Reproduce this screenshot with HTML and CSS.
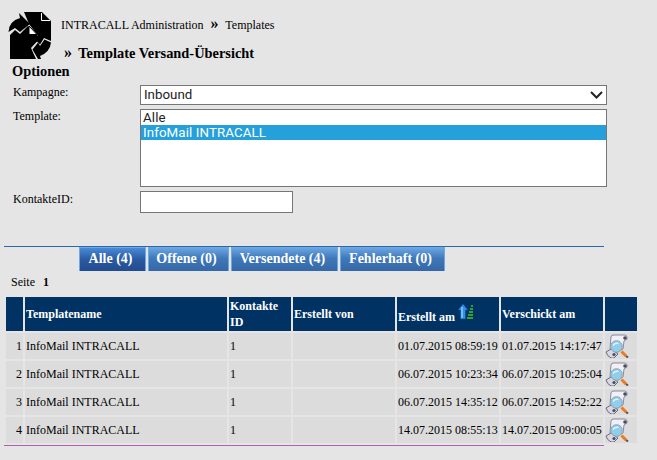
FILE: index.html
```html
<!DOCTYPE html>
<html lang="de">
<head>
  <meta charset="UTF-8">
  <title>INTRACALL Administration - Templates</title>
  <link rel="stylesheet" href="styles.css">
</head>
<body>
  <svg class="sprites" width="0" height="0">
    <symbol id="scroll" viewBox="0 0 24 24">
      <path d="M6 3 Q6 1 9 1 H20 Q23 2 22 5 L19 7 L18 15 L10 19 L5 15 Z" fill="#f0f0f6" stroke="#8a8a9c" stroke-width="1"/>
      <path d="M1 18 L6 15 L13 20 L9 24 H6 Q2 22 1 18 Z" fill="#d8d8e2" stroke="#6a6a7c" stroke-width="1"/>
      <circle cx="20" cy="4" r="1.8" fill="#4a4a60"/>
      <circle cx="9" cy="20.5" r="1.6" fill="#4a4a60"/>
      <circle cx="11.5" cy="12.5" r="5.8" fill="#92cdea" stroke="#8aa2b4" stroke-width="1"/>
      <path d="M8 11.5 Q10 8.5 13.5 9.5" fill="none" stroke="#dff3fc" stroke-width="1.5"/>
      <path d="M16.5 17.5 L21 22" stroke="#f07a1c" stroke-width="3"/>
      <path d="M21 22 L23 23.5" stroke="#555" stroke-width="2"/>
    </symbol>
  </svg>

  <header class="page-head">
    <svg class="logo" width="46" height="48" viewBox="8 12 46 48">
      <path d="M8.5 32 Q9 21 20 18 L19 13 L30 24 L20 32 L15 28 Z" fill="#000"/>
      <path d="M24 12 H42 L51 21 V41 L44 38 L40 44.5 L37 41.5 L31 47 V36 H38 L29 24 Z" fill="#000"/>
      <path d="M10 35 L15 30 L20 34 L28 26 L38 36 V40 L31 48 L36 59 H10 Z" fill="#000"/>
      <path d="M40 46 L44.5 39.5 L51 42.5 Q50 52 40 56 L41 59 H38 L32.5 49.5 L38 42.5 Z" fill="#000"/>
      <path d="M41.5 13 V20.5 H50" fill="none" stroke="#fff" stroke-width="1"/>
      <path d="M29 26 L37 34.5 H29 Z" fill="#fff" stroke="#000" stroke-width="1"/>
    </svg>
    <div class="head-text">
      <div class="crumbs">INTRACALL Administration <span class="sep">»</span> Templates</div>
      <h1 class="title"><span class="sep">»</span> Template Versand-Übersicht</h1>
    </div>
  </header>

  <section class="options">
    <h2 class="options-title">Optionen</h2>
    <div class="form-grid">
      <label class="form-label" for="kampagne">Kampagne:</label>
      <select id="kampagne" class="field field-select">
        <option>Inbound</option>
      </select>
      <label class="form-label" for="template">Template:</label>
      <select id="template" class="field field-list" size="4">
        <option>Alle</option>
        <option selected>InfoMail INTRACALL</option>
      </select>
      <label class="form-label form-label-low" for="kontakt">KontakteID:</label>
      <input id="kontakt" class="field field-input" type="text">
    </div>
  </section>

  <nav class="tabs">
    <a class="tab tab-active" href="#">Alle (4)</a>
    <a class="tab" href="#">Offene (0)</a>
    <a class="tab" href="#">Versendete (4)</a>
    <a class="tab" href="#">Fehlerhaft (0)</a>
  </nav>

  <div class="pager">Seite <b>1</b></div>

  <table class="grid">
    <thead>
      <tr>
        <th class="col-nr"></th>
        <th class="col-name">Templatename</th>
        <th class="col-id">Kontakte ID</th>
        <th class="col-by">Erstellt von</th>
        <th class="col-date">Erstellt am
          <svg class="sort-icon" width="16" height="18" viewBox="0 0 16 18">
            <path d="M5 1 L10 7 H7.5 V16 H2.5 V7 H0 Z" fill="#2f8fe6" stroke="#0d4f96" stroke-width="0.6"/>
            <path d="M4 4 V15" stroke="#bfe3ff" stroke-width="1"/>
            <path d="M13 2 h2 v2 h-2z M12 5 h3 v2 h-3z M11 8 h4 v2 h-4z M10 11 h5 v2 h-5z M9 14 h6 v2 h-6z" fill="#2ea52e"/>
          </svg>
        </th>
        <th class="col-date">Verschickt am</th>
        <th class="col-act"></th>
      </tr>
    </thead>
    <tbody>
      <tr>
        <td class="nr">1</td><td>InfoMail INTRACALL</td><td>1</td><td></td>
        <td>01.07.2015 08:59:19</td><td>01.07.2015 14:17:47</td>
        <td class="act"><svg class="view-icon" width="24" height="24"><use href="#scroll"/></svg></td>
      </tr>
      <tr>
        <td class="nr">2</td><td>InfoMail INTRACALL</td><td>1</td><td></td>
        <td>06.07.2015 10:23:34</td><td>06.07.2015 10:25:04</td>
        <td class="act"><svg class="view-icon" width="24" height="24"><use href="#scroll"/></svg></td>
      </tr>
      <tr>
        <td class="nr">3</td><td>InfoMail INTRACALL</td><td>1</td><td></td>
        <td>06.07.2015 14:35:12</td><td>06.07.2015 14:52:22</td>
        <td class="act"><svg class="view-icon" width="24" height="24"><use href="#scroll"/></svg></td>
      </tr>
      <tr>
        <td class="nr">4</td><td>InfoMail INTRACALL</td><td>1</td><td></td>
        <td>14.07.2015 08:55:13</td><td>14.07.2015 09:00:05</td>
        <td class="act"><svg class="view-icon" width="24" height="24"><use href="#scroll"/></svg></td>
      </tr>
    </tbody>
  </table>
  <div class="grid-end"></div>
</body>
</html>
```

FILE: styles.css
```css
html, body {
  margin: 0;
  padding: 0;
}

body {
  width: 657px;
  height: 460px;
  overflow: hidden;
  background-color: #e5e5e5;
  color: #000;
  font-family: "Liberation Serif", "Times New Roman", serif;
  font-size: 12px;
}

.sprites {
  display: block;
  height: 0;
}

.page-head {
  display: flex;
  height: 63px;
  padding: 12px 0 0 8px;
  box-sizing: border-box;
}

.head-text {
  margin-left: 7px;
}

.crumbs {
  margin-top: 6px;
  line-height: 14px;
}

.crumbs .sep {
  margin: 0 4px 0 4px;
  font-size: 16px;
  font-weight: bold;
  line-height: 12px;
}

.title {
  margin: 13px 0 0 3px;
  font-size: 14.4px;
  line-height: 16px;
}

.title .sep {
  margin-right: 3px;
  font-size: 16px;
  line-height: 12px;
}

.options {
  height: 183px;
  width: 592px;
  margin-left: 4px;
  padding-left: 8px;
  border-bottom: 1px solid #2a6aa8;
}

.options-title {
  margin: 0;
  font-size: 14.4px;
  line-height: 16px;
}

.form-grid {
  display: grid;
  grid-template-columns: 127px 467px;
  grid-template-rows: 24px 82px 22px;
  margin-top: 6px;
  margin-left: 1px;
}

.form-label {
  line-height: 14px;
}

.form-label-low {
  padding-top: 1px;
}

.field {
  box-sizing: border-box;
  margin: 0;
  padding: 0;
  border: 1px solid #767676;
  border-radius: 0;
  background-color: #fff;
  font-family: Roboto, Arial, sans-serif;
  font-size: 13.33px;
  color: #222;
}

.field-select {
  appearance: none;
  width: 467px;
  height: 20px;
  padding: 0 0 2px 3px;
  outline: none;
  background-image: url("data:image/svg+xml,%3Csvg xmlns='http://www.w3.org/2000/svg' width='13' height='8'%3E%3Cpath d='M1 1 L6.5 6.5 L12 1' fill='none' stroke='%23222' stroke-width='2'/%3E%3C/svg%3E");
  background-repeat: no-repeat;
  background-position: right 3px top 5px;
}

.field-list {
  width: 467px;
  height: 78px;
  overflow: hidden;
  outline: none;
  letter-spacing: 0.1px;
}

.field-list option {
  padding: 0 2px;
  line-height: 15px;
  min-height: 15px;
}

.field-list option:checked {
  background: linear-gradient(#26a0da, #26a0da);
  color: #fff;
  -webkit-text-fill-color: #fff;
}

.field-input {
  width: 153px;
  height: 22px;
}

.tabs {
  display: grid;
  grid-template-columns: 67px 81px 107px 105px;
  gap: 2px;
  height: 24px;
  margin-left: 79px;
}

.tab {
  display: block;
  box-sizing: border-box;
  padding-right: 4px;
  border: 1px solid #6fa8e0;
  border-bottom: 0;
  background: linear-gradient(#6aa5e2, #3f78b8 45%, #3568a8);
  color: #fff;
  font-size: 14px;
  font-weight: bold;
  line-height: 22px;
  text-align: center;
  text-decoration: none;
  white-space: nowrap;
}

.tab-active {
  background: linear-gradient(#4a8ad6, #2a5aa0 50%, #234c90);
}

.pager {
  height: 20px;
  margin: 4px 0 0 11px;
  line-height: 14px;
}

.pager b {
  margin-left: 5px;
}

.grid {
  table-layout: fixed;
  width: 635px;
  margin-left: 4px;
  border-collapse: separate;
  border-spacing: 2px;
}

.grid th {
  height: 34px;
  padding: 0 1px;
  background-color: #003264;
  color: #fff;
  font-size: 12px;
  line-height: 16px;
  text-align: left;
}

.grid td {
  height: 26px;
  padding: 1px 1px 0;
  box-sizing: border-box;
  background-color: #dcdcdc;
  font-size: 12px;
  white-space: nowrap;
}

.col-nr { width: 15px; }
.col-name { width: 200px; }
.col-id { width: 60px; }
.col-by { width: 100px; }
.col-date { width: 100px; }
.col-act { width: 30px; }

.grid .nr {
  text-align: right;
}

.grid .act {
  padding: 0;
  vertical-align: middle;
}

.view-icon {
  display: block;
}

.sort-icon {
  vertical-align: 0;
}

.grid-end {
  width: 600px;
  margin: 0 0 0 4px;
  border-top: 1px solid #b05fb5;
}
```
